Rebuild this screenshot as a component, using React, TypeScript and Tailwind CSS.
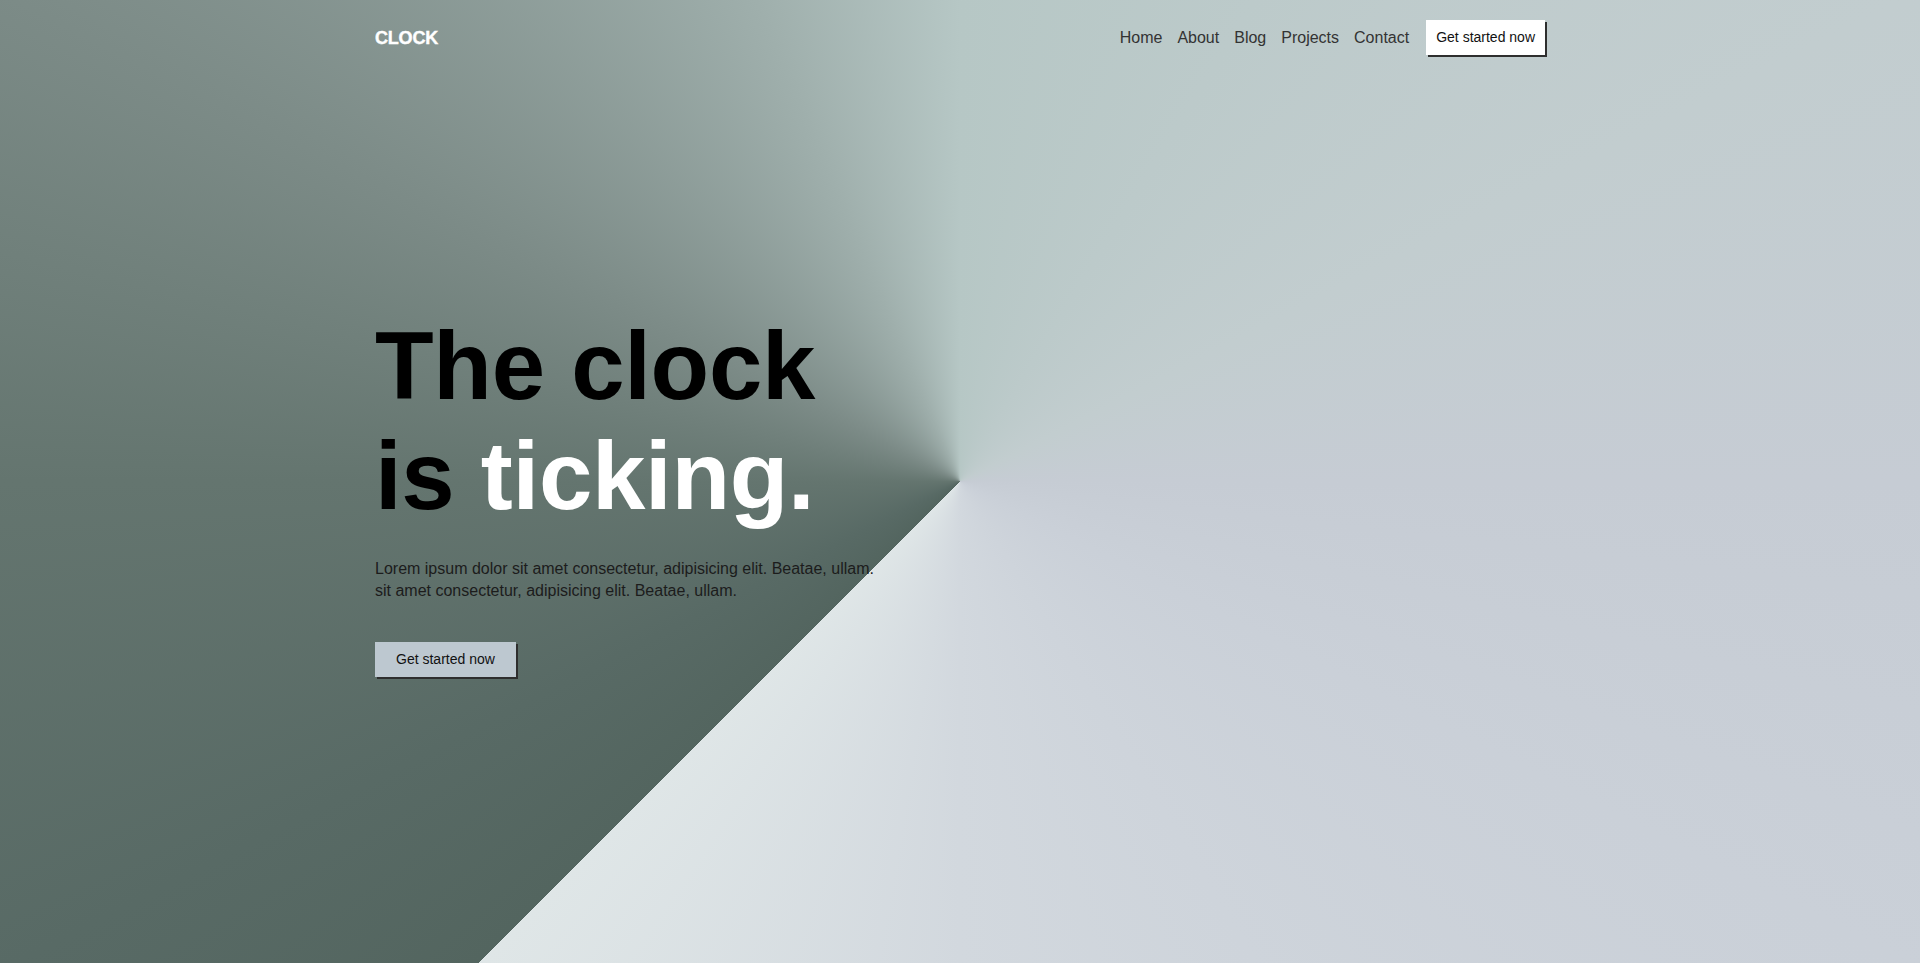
import React from "react";

export default function App() {
  return (
    <div
      className="relative h-screen w-full overflow-hidden bg-[image:conic-gradient(from_225deg_at_50%_50%,#53655f_0deg,#586a65_18deg,#64756f_45deg,#7c8b87_72deg,#9fafac_112deg,#b6c7c5_135deg,#c2cdcf_198deg,#c6ccd4_225deg,#cad0d8_252deg,#d2d8de_315deg,#dfe6e7_360deg)]"
      style={{ fontFamily: '"Liberation Sans", Arial, sans-serif' }}
    >
      <div className="mx-auto w-[1170px]">
        <nav className="flex h-[75px] items-center justify-between">
          <div className="text-[18px] font-black leading-none tracking-[-0.2px] text-white [-webkit-text-stroke:0.4px_white]">CLOCK</div>
          <div className="flex items-center">
            <ul className="flex items-center gap-[15px] text-[16px] text-[#333333]">
              <li>Home</li>
              <li>About</li>
              <li>Blog</li>
              <li>Projects</li>
              <li>Contact</li>
            </ul>
            <button className="ml-[17px] flex h-[35px] items-center bg-white px-[10px] text-[14px] text-[#111] shadow-[2px_2px_0_#2e2e2e]">
              Get started now
            </button>
          </div>
        </nav>

        <section className="mt-[236px]">
          <h1 className="text-[96px] font-bold leading-[1.15] tracking-[-0.3px] text-black">
            The clock
            <br />
            is <span className="text-white">ticking.</span>
          </h1>
          <p className="mt-[26px] w-[510px] text-[16px] leading-[22px] text-[#1c1c1c]">
            Lorem ipsum dolor sit amet consectetur, adipisicing elit. Beatae, ullam. sit amet consectetur, adipisicing elit. Beatae, ullam.
          </p>
          <button className="mt-[40px] flex h-[35px] items-center bg-[#bdc8d0] px-[21px] text-[14px] text-[#111] shadow-[2px_2px_0_#2e2e2e]">
            Get started now
          </button>
        </section>
      </div>
    </div>
  );
}
